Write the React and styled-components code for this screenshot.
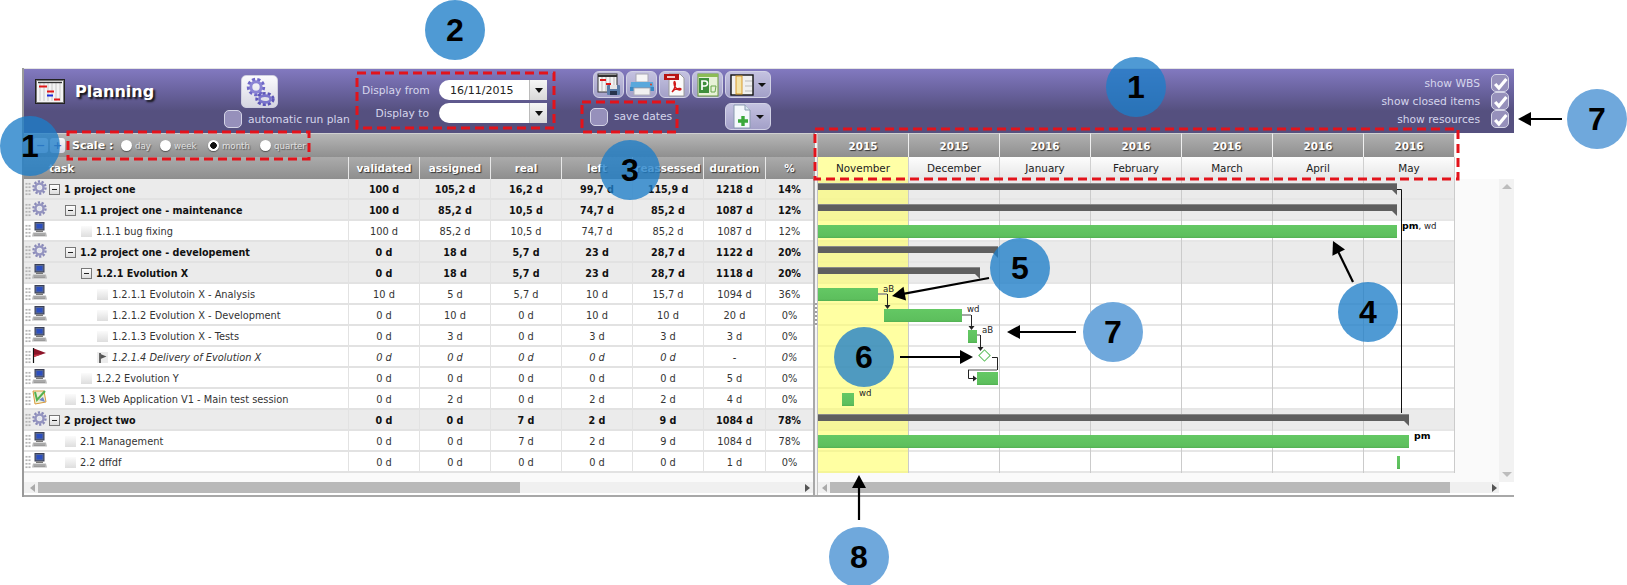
import React from 'react';
import styled, { createGlobalStyle } from 'styled-components';

const GlobalStyle = createGlobalStyle`
	html, body { margin: 0; padding: 0; background: #fff; }
	body { font-family: "DejaVu Sans", Verdana, sans-serif; }
	* { box-sizing: border-box; }
`;

const Page = styled.div`
	position: relative;
	width: 1627px;
	height: 585px;
	padding: 68px 0 0 22px;
	overflow: hidden;
`;
const Frame = styled.div`
	width: 1492px;
	border-left: 2px solid #9a9a9a;
`;

/* header */
const Header = styled.div`
	display: flex;
	height: 65px;
	padding: 0 5px 0 11px;
	background: linear-gradient(#8279c0 0, #6a639f 22px, #55507f 42px, #55507f 100%);
	border-top: 1px solid #e4e4e4;
	color: #d6d6ec;
	font-size: 10.7px;
`;
const Title = styled.div`
	display: flex;
	align-items: center;
	gap: 10px;
	width: 189px;
	padding-bottom: 20px;
	font-size: 16px;
	font-weight: bold;
	color: #fff;
	text-shadow: 2px 2px 2px #111;
`;
const RunPlan = styled.div`
	width: 128px;
	padding-top: 6px;
`;
const LightButton = styled.div`
	display: flex;
	align-items: center;
	justify-content: center;
	width: 37px;
	height: 33px;
	margin-left: 17px;
	border-radius: 5px;
	background: linear-gradient(#fbfbfd, #d6d6e2);
	border: 1px solid #cfcfe0;
`;
const CheckRow = styled.label`
	display: flex;
	align-items: center;
	gap: 6px;
	height: 18px;
	margin-top: 2px;
	white-space: nowrap;
`;
const CheckBox = styled.span`
	display: flex;
	align-items: center;
	justify-content: center;
	flex: none;
	width: 18px;
	height: 18px;
	border-radius: 5px;
	border: 1.5px solid #d4d4e6;
	background: #9690bb;
`;
const DateForm = styled.div`
	display: grid;
	grid-template-columns: 67px 108px;
	grid-auto-rows: 20px;
	column-gap: 10px;
	row-gap: 3px;
	align-items: center;
	margin-left: 10px;
	padding-top: 11px;
`;
const DateLabel = styled.div`
	text-align: right;
	white-space: nowrap;
`;
const DateInput = styled.div`
	display: flex;
	align-items: center;
	height: 20px;
	padding-left: 11px;
	background: #fff;
	border-radius: 10px 0 0 10px;
	color: #222;
	font-size: 11px;
	position: relative;
	overflow: hidden;
`;
const DateDrop = styled.span`
	display: flex;
	align-items: center;
	justify-content: center;
	width: 18px;
	height: 20px;
	margin-left: auto;
	background: linear-gradient(#f6f6f6, #d8d8d8);
	border-left: 1px solid #bbb;
	&::after {
		content: '';
		border: 4px solid transparent;
		border-top: 5px solid #111;
		border-bottom: 0;
	}
`;
const Toolbar = styled.div`
	width: 178px;
	margin-left: 46px;
	padding-top: 2px;
`;
const ToolRow = styled.div`
	display: flex;
	align-items: center;
	justify-content: ${props => props.$between ? 'space-between' : 'flex-start'};
	gap: 2px;
	height: 27px;
	margin-top: ${props => props.$between ? '5px' : 0};
`;
const SaveDates = styled.label`
	display: flex;
	align-items: center;
	gap: 6px;
	margin-left: -3px;
	white-space: nowrap;
`;
const ToolButton = styled.div`
	display: flex;
	align-items: center;
	justify-content: center;
	gap: 4px;
	flex: none;
	width: ${props => props.$wide ? '46px' : '31px'};
	height: 27px;
	border-radius: 6px;
	border: 1.5px solid #d2d2e6;
	background: linear-gradient(#c4c2e0, #a3a0c8);
`;
const Caret = styled.span`
	border: 4px solid transparent;
	border-top: 4px solid #111;
	border-bottom: 0;
`;
const ShowOptions = styled.div`
	margin-left: auto;
	padding-top: 5px;
`;
const ShowRow = styled.label`
	display: flex;
	align-items: center;
	justify-content: flex-end;
	gap: 11px;
	height: 18px;
`;

/* panes */
const Body = styled.div`
	display: flex;
	border-bottom: 2px solid #a8a8a8;
`;
const LeftPane = styled.div`
	width: 789px;
	flex: none;
`;
const Splitter = styled.div`
	display: flex;
	align-items: center;
	width: 5px;
	flex: none;
	background: #f4f4f4;
	border-left: 2px solid #a8a8a8;
	border-right: 1px solid #c4c4c4;
	&::after {
		content: '';
		width: 2px;
		height: 26px;
		margin-left: 0;
		background: repeating-linear-gradient(#fff 0 2px, #a0a0a0 2px 4px);
	}
`;
const RightPane = styled.div`
	width: 696px;
	flex: none;
`;
const ScaleBar = styled.div`
	display: flex;
	align-items: center;
	height: 24px;
	padding-left: 9px;
	background: linear-gradient(#b6b6b6, #8f8f8f);
	border-top: 1px solid #d0d0d0;
`;
const MiniButton = styled.span`
	display: flex;
	align-items: center;
	justify-content: center;
	width: 15px;
	height: 15px;
	margin-right: 2px;
	border-radius: 3px;
	background: linear-gradient(#f8f8fb, #d8d8e6);
	color: #5a63b0;
	font-size: 11px;
	font-weight: bold;
`;
const ScaleLabel = styled.span`
	margin: 0 9px 0 5px;
	width: 40px;
	font-size: 11px;
	font-weight: bold;
	color: #fff;
	text-shadow: 1px 1px 1px #333;
	white-space: nowrap;
`;
const ScaleOption = styled.label`
	display: flex;
	align-items: center;
	gap: 3px;
	width: ${props => props.$w}px;
	font-size: 8.6px;
	color: #e2e2e2;
	text-shadow: 1px 1px 1px #555;
`;
const Radio = styled.span`
	display: block;
	flex: none;
	width: 11px;
	height: 11px;
	border-radius: 50%;
	background: ${props => props.$on ? 'radial-gradient(circle, #111 0 3px, #fff 3.6px)' : '#fff'};
	box-shadow: 0 1px 1px #555;
`;
const Columns = styled.div`
	display: grid;
	grid-template-columns: 324px repeat(5, 71px) 62px 48px;
`;
const HeadCell = styled.div`
	display: flex;
	align-items: center;
	justify-content: ${props => props.$left ? 'flex-start' : 'center'};
	height: 22px;
	padding-left: ${props => props.$left ? '25px' : 0};
	background: linear-gradient(#ababab, #8e8e8e);
	border-left: ${props => props.$left ? 0 : '1px solid #e8e8e8'};
	font-size: 10.4px;
	font-weight: bold;
	color: #fff;
	text-shadow: 1px 1px 1px #333;
	white-space: nowrap;
`;
const Cell = styled.div`
	display: flex;
	align-items: center;
	justify-content: center;
	height: 21px;
	padding-top: 1px;
	background: ${props => props.$bold ? '#ebebeb' : '#fff'};
	border-bottom: 2px solid #e2e2e2;
	border-left: 1px solid #e2e2e2;
	font-size: ${props => props.$bold ? '9.6px' : '9.8px'};
	font-weight: ${props => props.$bold ? 'bold' : 'normal'};
	font-style: ${props => props.$italic ? 'italic' : 'normal'};
	color: ${props => props.$bold ? '#111' : '#333'};
	white-space: nowrap;
`;
const TaskCell = styled(Cell)`
	justify-content: flex-start;
	border-left: 0;
	padding-left: 1px;
`;
const Handle = styled.span`
	flex: none;
	width: 6px;
	height: 14px;
	margin-right: 1px;
	background: radial-gradient(circle, #b4b4b4 0 1px, transparent 1.2px) 0 0 / 3px 3.5px;
`;
const TaskIcon = styled.span`
	display: flex;
	flex: none;
	width: 15px;
	height: 17px;
	margin-top: -2px;
`;
const Tree = styled.span`
	display: flex;
	align-items: center;
	gap: 4px;
	margin-left: ${props => 2 + props.$level * 16}px;
`;
const Toggle = styled.span`
	position: relative;
	display: block;
	flex: none;
	width: 11px;
	height: 11px;
	border: 1px solid #777;
	background: linear-gradient(#fff, #dcdcdc);
	&::after {
		content: '';
		position: absolute;
		left: 2px;
		top: 4px;
		width: 5px;
		height: 1px;
		background: #222;
	}
`;
const Leaf = styled.span`
	display: block;
	flex: none;
	width: 11px;
	height: 11px;
	background: linear-gradient(#fbfbfb, #dedede);
`;
const Spacer = styled.div`
	height: 9px;
	background: #fafafa;
`;
const HScroll = styled.div`
	display: flex;
	align-items: center;
	height: 11px;
	padding-left: ${props => props.$start}px;
	background: #f0f0f0;
	position: relative;
`;
const Thumb = styled.span`
	display: block;
	flex: none;
	width: ${props => props.$w}px;
	height: 11px;
	margin-left: 3px;
	background: #b9b9b9;
`;
const ArrowH = styled.span`
	flex: none;
	margin-left: ${props => props.$auto ? 'auto' : 0};
	margin-right: ${props => props.$auto ? props.$end + 'px' : 0};
	border: 4px solid transparent;
	border-left: ${props => props.$right ? '5px solid #555' : 0};
	border-right: ${props => props.$right ? 0 : '5px solid #aaa'};
`;
const ScrollFoot = styled.div`
	height: 2px;
	background: #fff;
`;

/* gantt */
const GanttHead = styled.div`
	display: grid;
	grid-template-columns: repeat(7, 91px);
	width: 637px;
`;
const YearCell = styled.div`
	display: flex;
	align-items: center;
	justify-content: center;
	height: 24px;
	background: linear-gradient(#b0b0b0, #8f8f8f);
	border-top: 1px solid #d0d0d0;
	border-right: 1px solid #f0f0f0;
	font-size: 10.4px;
	font-weight: bold;
	color: #fff;
	text-shadow: 1px 1px 1px #333;
`;
const MonthCell = styled.div`
	display: flex;
	align-items: center;
	justify-content: center;
	height: 22px;
	background: ${props => props.$current ? '#ffffa6' : 'linear-gradient(#fdfdfd, #e6e6e6)'};
	border-right: 1px solid #d0d0d0;
	font-size: 10.4px;
	color: #222;
`;
const GanttArea = styled.div`
	display: flex;
	background: #fafafa;
`;
const GanttBody = styled.div`
	position: relative;
	width: 637px;
	height: 303px;
`;
const GanttRow = styled.div`
	position: relative;
	height: 21px;
	background: ${props => props.$bold ? '#ebebeb' : '#fff'};
	border-bottom: 2px solid #e6e6e6;
`;
const Bands = styled.div`
	position: absolute;
	left: 0;
	top: 0;
	z-index: 1;
	display: grid;
	grid-template-columns: repeat(7, 91px);
	width: 637px;
	height: 294px;
`;
const Band = styled.div`
	background: ${props => props.$current ? 'rgba(255, 255, 100, 0.6)' : 'transparent'};
	border-right: 1px solid #cbcbcb;
`;
const Bar = styled.div`
	position: absolute;
	z-index: 2;
	left: ${props => props.$x}px;
	top: ${props => props.$top}px;
	width: ${props => props.$w}px;
	height: ${props => props.$h}px;
	background: ${props => props.$dark ? 'linear-gradient(#8a8a8a 0 1px, #5f5f5f 1px)' : 'linear-gradient(#64c864, #5dbf5d 85%, #52b052)'};
	&::after {
		display: ${props => props.$dark ? 'block' : 'none'};
		content: '';
		position: absolute;
		right: 0;
		top: 100%;
		border-top: 5px solid #5f5f5f;
		border-left: 5px solid transparent;
	}
`;
const BarLabel = styled.span`
	position: absolute;
	z-index: 2;
	left: ${props => props.$x}px;
	top: ${props => props.$top}px;
	font-size: 8.6px;
	line-height: 10px;
	color: #222;
	white-space: nowrap;
	b { font-size: 9.4px; color: #000; }
`;
const Diamond = styled.span`
	position: absolute;
	z-index: 2;
	left: 162px;
	top: 4px;
	width: 9px;
	height: 9px;
	transform: rotate(45deg);
	background: #fff;
	border: 1.5px solid #5dbf5d;
`;
const DepLines = styled.svg`
	position: absolute;
	left: 0;
	top: 0;
	z-index: 3;
`;
const Gutter = styled.div`
	width: 44px;
	flex: none;
`;
const VScroll = styled.div`
	display: flex;
	flex-direction: column;
	align-items: center;
	justify-content: space-between;
	width: 15px;
	flex: none;
	padding: 5px 0;
	background: #f2f2f2;
`;
const ArrowV = styled.span`
	border: 5px solid transparent;
	border-bottom: ${props => props.$down ? 0 : '5px solid #bdbdbd'};
	border-top: ${props => props.$down ? '5px solid #bdbdbd' : 0};
`;
const GanttScroll = styled.div`
	width: 681px;
`;

/* annotations over the screenshot */
const Marks = styled.svg`
	position: absolute;
	left: 0;
	top: 0;
	z-index: 5;
	pointer-events: none;
`;
const Bubble = styled.div`
	position: absolute;
	z-index: 6;
	left: ${props => props.$x - 30}px;
	top: ${props => props.$y - 30}px;
	display: flex;
	align-items: center;
	justify-content: center;
	width: 60px;
	height: 60px;
	border-radius: 50%;
	background: ${props => props.$light ? '#6fa8dc' : 'rgba(30, 125, 200, 0.78)'};
	font-family: "Liberation Sans", Arial, sans-serif;
	font-size: 32px;
	font-weight: bold;
	color: #000;
`;

const GearSmall = () => (
	<svg width="15" height="15" viewBox="0 0 15 15">
		<circle cx="7.5" cy="7.5" r="6" fill="none" stroke="#8a8ab8" strokeWidth="2.4" strokeDasharray="2.2 1.5" />
		<circle cx="7.5" cy="7.5" r="4" fill="none" stroke="#9494c0" strokeWidth="2.4" />
		<circle cx="7.5" cy="7.5" r="1.8" fill="#dfe2ee" />
	</svg>
);
const Computer = () => (
	<svg width="15" height="15" viewBox="0 0 15 15">
		<rect x="3" y="0.5" width="9" height="7.5" fill="#5a6a90" stroke="#3a3f55" />
		<rect x="4.500" y="2" width="6" height="4.500" fill="#2c4fc0" />
		<rect x="4" y="8.500" width="7" height="1.500" fill="#777" />
		<path d="M1 10.500h13l1 4H0z" fill="#b8b8b8" />
		<path d="M2 12h11M2 13.500h11" stroke="#8e8e8e" strokeWidth=".7" />
	</svg>
);
const RedFlag = () => (
	<svg width="15" height="15" viewBox="0 0 15 15">
		<path d="M1.500 0v15" stroke="#111" strokeWidth="1.2" />
		<path d="M2 .5l12 4.500-12 4z" fill="#8c1428" />
		<path d="M2 9l8-2.800-8 .6z" fill="#c83848" />
	</svg>
);
const TestSession = () => (
	<svg width="15" height="15" viewBox="0 0 15 15">
		<path d="M1 1h11l2 11-11 2z" fill="#eef0d8" stroke="#d89a3c" />
		<path d="M3 2l2 8 8-9" fill="none" stroke="#54b050" strokeWidth="2" />
		<path d="M7 10l4-3 2 5z" fill="#6f86c8" />
	</svg>
);
const SmallFlag = () => (
	<svg width="11" height="11" viewBox="0 0 11 11">
		<rect width="11" height="11" fill="#ececec" />
		<path d="M3 1v10" stroke="#222" strokeWidth="1.3" />
		<path d="M3.500 2l6 2.500-6 2.500z" fill="#555" />
	</svg>
);
const TASK_ICONS = { gear: GearSmall, pc: Computer, flag: RedFlag, test: TestSession };

const PlanningIcon = () => (
	<svg width="30" height="25" viewBox="0 0 30 25">
		<rect x=".5" y=".5" width="29" height="24" fill="#f4f4f4" stroke="#222" />
		<rect x="1.500" y="1.500" width="27" height="22" fill="none" stroke="#777" />
		<path d="M5 3v19M9 3v19M13 3v19M17 3v19M21 3v19M25 3v19" stroke="#c8c8c8" />
		<path d="M3 3.500h24" stroke="#333" strokeWidth="1.400" />
		<path d="M4 7.500h8M12 12.500h7M19 20.500h6" stroke="#e01818" strokeWidth="2" />
		<path d="M12 16.500h6" stroke="#1c2cd8" strokeWidth="2" />
	</svg>
);
const GearsIcon = () => (
	<svg width="30" height="30" viewBox="0 0 30 30">
		<circle cx="11" cy="10" r="7.500" fill="none" stroke="#6f68c8" strokeWidth="3.400" strokeDasharray="3 2.200" />
		<circle cx="11" cy="10" r="5.200" fill="none" stroke="#8a84d4" strokeWidth="3" />
		<ellipse cx="20" cy="22" rx="8.200" ry="5.600" fill="none" stroke="#5d56b8" strokeWidth="3" strokeDasharray="3 2" />
		<ellipse cx="20" cy="22" rx="5.600" ry="3.400" fill="none" stroke="#7a74cc" strokeWidth="2.600" />
	</svg>
);
const CheckMark = () => (
	<svg width="15" height="15" viewBox="0 0 14 14">
		<path d="M2 7.500l3.500 3.800L12.500 2.800" fill="none" stroke="#fff" strokeWidth="3" />
	</svg>
);
const CalendarSave = () => (
	<svg width="24" height="23" viewBox="0 0 24 23">
		<rect x="1" y="1" width="19" height="18" fill="#f4f4f4" stroke="#333" />
		<path d="M1 3h19" stroke="#333" strokeWidth="2" />
		<path d="M5 4v14M9 4v14M13 4v14M17 4v14" stroke="#bbb" />
		<path d="M3 7h6M9 11h5" stroke="#e01818" strokeWidth="2" />
		<rect x="10" y="12" width="13" height="10" rx="1" fill="#5a7ca8" />
		<rect x="13" y="12" width="7" height="4" fill="#e6e6e6" />
		<rect x="13" y="18" width="7" height="4" fill="#26344c" />
	</svg>
);
const Printer = () => (
	<svg width="26" height="23" viewBox="0 0 26 23">
		<rect x="7" y="1" width="12" height="8" fill="#f6f6f6" stroke="#a8a8b4" />
		<path d="M2 9h22l1 8H1z" fill="#5aa8dc" />
		<rect x="1" y="14" width="24" height="4" fill="#3a88c4" />
		<rect x="5" y="15" width="16" height="7" fill="#f0f0f0" stroke="#b0b0b8" />
		<circle cx="22" cy="11.500" r="1" fill="#e04020" />
	</svg>
);
const PdfDoc = () => (
	<svg width="24" height="24" viewBox="0 0 24 24">
		<path d="M6 1h11l4 4v18H6z" fill="#fafafa" stroke="#9a9a9a" />
		<rect x="1" y="1" width="15" height="6" fill="#b81414" />
		<rect x="4" y="3" width="8" height="2" fill="#f4c8c8" />
		<path d="M9 19c3-3 4-8 3-10s-2 3 1 6 5 2 5 1-6-1-9 3z" fill="none" stroke="#d01818" strokeWidth="1.400" />
	</svg>
);
const ProjectDoc = () => (
	<svg width="24" height="24" viewBox="0 0 24 24">
		<rect x="2" y="1" width="20" height="22" fill="#e8f2d8" stroke="#6a9a3c" />
		<rect x="2" y="1" width="20" height="3" fill="#8cbc54" />
		<rect x="3" y="5" width="10" height="15" fill="#3f8f3c" />
		<path d="M6 17V8h3a2.500 2.500 0 0 1 0 5H6" fill="none" stroke="#fff" strokeWidth="1.700" />
		<path d="M15 13h5l-1 6h-4z" fill="none" stroke="#6aa84c" />
	</svg>
);
const ColumnsIcon = () => (
	<svg width="24" height="22" viewBox="0 0 24 22">
		<rect x="1" y="1" width="22" height="20" fill="#f0f0f0" stroke="#111" strokeWidth="1.400" />
		<rect x="6" y="2" width="6" height="18" fill="#f4e4a8" stroke="#d89a2c" />
		<path d="M15 7h7M15 12h7M15 17h7" stroke="#bbb" />
	</svg>
);
const NewDoc = () => (
	<svg width="20" height="25" viewBox="0 0 20 25">
		<path d="M2 1h11l5 5v18H2z" fill="#f4f8fc" stroke="#8a9ab0" />
		<path d="M13 1v5h5" fill="#d8e4f0" stroke="#8a9ab0" />
		<path d="M11 12v10M6 17h10" stroke="#3aa83a" strokeWidth="3.400" />
	</svg>
);

const COLS = ['validated', 'assigned', 'real', 'left', 'reassessed', 'duration', '%'];
const ROWS = [
	{ level: 0, icon: 'gear', name: '1 project one', bold: true, vals: ['100 d', '105,2 d', '16,2 d', '99,7 d', '115,9 d', '1218 d', '14%'] },
	{ level: 1, icon: 'gear', name: '1.1 project one - maintenance', bold: true, vals: ['100 d', '85,2 d', '10,5 d', '74,7 d', '85,2 d', '1087 d', '12%'] },
	{ level: 2, icon: 'pc', name: '1.1.1 bug fixing', vals: ['100 d', '85,2 d', '10,5 d', '74,7 d', '85,2 d', '1087 d', '12%'] },
	{ level: 1, icon: 'gear', name: '1.2 project one - developement', bold: true, vals: ['0 d', '18 d', '5,7 d', '23 d', '28,7 d', '1122 d', '20%'] },
	{ level: 2, icon: 'pc', name: '1.2.1 Evolution X', bold: true, vals: ['0 d', '18 d', '5,7 d', '23 d', '28,7 d', '1118 d', '20%'] },
	{ level: 3, icon: 'pc', name: '1.2.1.1 Evolutoin X - Analysis', vals: ['10 d', '5 d', '5,7 d', '10 d', '15,7 d', '1094 d', '36%'] },
	{ level: 3, icon: 'pc', name: '1.2.1.2 Evolution X - Development', vals: ['0 d', '10 d', '0 d', '10 d', '10 d', '20 d', '0%'] },
	{ level: 3, icon: 'pc', name: '1.2.1.3 Evolution X - Tests', vals: ['0 d', '3 d', '0 d', '3 d', '3 d', '3 d', '0%'] },
	{ level: 3, icon: 'flag', name: '1.2.1.4 Delivery of Evolution X', italic: true, vals: ['0 d', '0 d', '0 d', '0 d', '0 d', '-', '0%'] },
	{ level: 2, icon: 'pc', name: '1.2.2 Evolution Y', vals: ['0 d', '0 d', '0 d', '0 d', '0 d', '5 d', '0%'] },
	{ level: 1, icon: 'test', name: '1.3 Web Application V1 - Main test session', vals: ['0 d', '2 d', '0 d', '2 d', '2 d', '4 d', '0%'] },
	{ level: 0, icon: 'gear', name: '2 project two', bold: true, vals: ['0 d', '0 d', '7 d', '2 d', '9 d', '1084 d', '78%'] },
	{ level: 1, icon: 'pc', name: '2.1 Management', vals: ['0 d', '0 d', '7 d', '2 d', '9 d', '1084 d', '78%'] },
	{ level: 1, icon: 'pc', name: '2.2 dffdf', vals: ['0 d', '0 d', '0 d', '0 d', '0 d', '1 d', '0%'] },
];

const MONTHS = [
	['2015', 'November'], ['2015', 'December'], ['2016', 'January'], ['2016', 'February'],
	['2016', 'March'], ['2016', 'April'], ['2016', 'May'],
];

// one entry per gantt row: bars in px from the left edge of the chart
const GANTT = [
	{ bars: [{ x: 0, w: 579, dark: true }] },
	{ bars: [{ x: 0, w: 579, dark: true }] },
	{ bars: [{ x: 0, w: 579 }], labels: [{ x: 584, top: 0, html: <><b>pm</b>, wd</> }] },
	{ bars: [{ x: 0, w: 180, dark: true }] },
	{ bars: [{ x: 0, w: 162, dark: true }] },
	{ bars: [{ x: 0, w: 60 }], labels: [{ x: 65, top: 0, html: 'aB' }] },
	{ bars: [{ x: 66, w: 78 }], labels: [{ x: 149, top: -1, html: 'wd' }] },
	{ bars: [{ x: 150, w: 9 }], labels: [{ x: 164, top: -1, html: 'aB' }] },
	{ diamond: true },
	{ bars: [{ x: 159, w: 21 }] },
	{ bars: [{ x: 24, w: 12 }], labels: [{ x: 41, top: -1, html: 'wd' }] },
	{ bars: [{ x: 0, w: 591, dark: true }] },
	{ bars: [{ x: 0, w: 591 }], labels: [{ x: 596, top: 0, html: <b>pm</b> }] },
	{ bars: [{ x: 579, w: 3 }] },
];

const RedBox = ({ x, y, w, h }) => (
	<rect x={x} y={y} width={w} height={h} fill="none" stroke="#e3131b" strokeWidth="3" strokeDasharray="9 5" />
);

const Arrow = ({ from, to }) => {
	const angle = Math.atan2(to[1] - from[1], to[0] - from[0]);
	const point = (len, off) => [
		to[0] - len * Math.cos(angle) - off * Math.sin(angle),
		to[1] - len * Math.sin(angle) + off * Math.cos(angle),
	].join(',');
	return (
		<g>
			<line x1={from[0]} y1={from[1]} x2={to[0] - 10 * Math.cos(angle)} y2={to[1] - 10 * Math.sin(angle)} stroke="#000" strokeWidth="2.2" />
			<polygon points={`${to.join(',')} ${point(13, 7)} ${point(13, -7)}`} fill="#000" />
		</g>
	);
};

const Planning = () => (
	<Frame>
		<Header>
			<Title><PlanningIcon />Planning</Title>
			<RunPlan>
				<LightButton><GearsIcon /></LightButton>
				<CheckRow><CheckBox />automatic run plan</CheckRow>
			</RunPlan>
			<DateForm>
				<DateLabel>Display from</DateLabel>
				<DateInput>16/11/2015<DateDrop /></DateInput>
				<DateLabel>Display to</DateLabel>
				<DateInput><DateDrop /></DateInput>
			</DateForm>
			<Toolbar>
				<ToolRow>
					<ToolButton><CalendarSave /></ToolButton>
					<ToolButton><Printer /></ToolButton>
					<ToolButton><PdfDoc /></ToolButton>
					<ToolButton><ProjectDoc /></ToolButton>
					<ToolButton $wide><ColumnsIcon /><Caret /></ToolButton>
				</ToolRow>
				<ToolRow $between>
					<SaveDates><CheckBox />save dates</SaveDates>
					<ToolButton $wide><NewDoc /><Caret /></ToolButton>
				</ToolRow>
			</Toolbar>
			<ShowOptions>
				<ShowRow>show WBS<CheckBox><CheckMark /></CheckBox></ShowRow>
				<ShowRow>show closed items<CheckBox><CheckMark /></CheckBox></ShowRow>
				<ShowRow>show resources<CheckBox><CheckMark /></CheckBox></ShowRow>
			</ShowOptions>
		</Header>
		<Body>
			<LeftPane>
				<ScaleBar>
					<MiniButton>−</MiniButton>
					<MiniButton>+</MiniButton>
					<ScaleLabel>Scale :</ScaleLabel>
					<ScaleOption $w={39}><Radio />day</ScaleOption>
					<ScaleOption $w={48}><Radio />week</ScaleOption>
					<ScaleOption $w={52}><Radio $on />month</ScaleOption>
					<ScaleOption $w={50}><Radio />quarter</ScaleOption>
				</ScaleBar>
				<Columns>
					<HeadCell $left>task</HeadCell>
					{COLS.map(col => <HeadCell key={col}>{col}</HeadCell>)}
					{ROWS.map(row => {
						const Icon = TASK_ICONS[row.icon];
						return (
							<React.Fragment key={row.name}>
								<TaskCell $bold={row.bold} $italic={row.italic}>
									<Handle />
									<TaskIcon><Icon /></TaskIcon>
									<Tree $level={row.level}>
										{row.bold ? <Toggle /> : row.italic ? <SmallFlag /> : <Leaf />}
										{row.name}
									</Tree>
								</TaskCell>
								{row.vals.map((val, i) => (
									<Cell key={i} $bold={row.bold} $italic={row.italic}>{val}</Cell>
								))}
							</React.Fragment>
						);
					})}
				</Columns>
				<Spacer />
				<HScroll $start={6}>
					<ArrowH />
					<Thumb $w={482} />
					<ArrowH $right $auto $end={3} />
				</HScroll>
				<ScrollFoot />
			</LeftPane>
			<Splitter />
			<RightPane>
				<GanttHead>
					{MONTHS.map(([year], i) => <YearCell key={i}>{year}</YearCell>)}
					{MONTHS.map(([, month], i) => <MonthCell key={month} $current={i === 0}>{month}</MonthCell>)}
				</GanttHead>
				<GanttArea>
					<GanttBody>
						{GANTT.map((row, i) => (
							<GanttRow key={i} $bold={ROWS[i].bold}>
								{(row.bars || []).map((bar, j) => (
									<Bar key={j} $x={bar.x} $w={bar.w} $dark={bar.dark} $top={bar.dark ? 4 : 3.5} $h={bar.dark ? 7 : 13} />
								))}
								{(row.labels || []).map((label, j) => (
									<BarLabel key={j} $x={label.x} $top={label.top}>{label.html}</BarLabel>
								))}
								{row.diamond && <Diamond />}
							</GanttRow>
						))}
						<Bands>
							{MONTHS.map((m, i) => <Band key={i} $current={i === 0} />)}
						</Bands>
						<DepLines width="637" height="294" viewBox="0 0 637 294" fill="none">
							<path d="M60 115H69" stroke="#888" strokeWidth="1.500" />
							<path d="M69.500 115V127" stroke="#222" />
							<path d="M66.500 126l3 4 3-4z" fill="#222" />
							<path d="M144 136H153" stroke="#888" strokeWidth="1.500" />
							<path d="M153.500 136V147" stroke="#222" />
							<path d="M150.500 147l3 4 3-4z" fill="#222" />
							<path d="M159 156H162" stroke="#888" strokeWidth="1.500" />
							<path d="M162.500 156V168" stroke="#222" />
							<path d="M159.500 168l3 4 3-4z" fill="#222" />
							<path d="M174 178.500H179.500V191" stroke="#222" />
							<path d="M179 191H150" stroke="#888" strokeWidth="1.500" />
							<path d="M150.500 191V199.500H155" stroke="#222" />
							<path d="M155 196.500l4 3-4 3z" fill="#222" />
							<path d="M579 10.500H583.500V234" stroke="#111" />
						</DepLines>
					</GanttBody>
					<Gutter />
					<VScroll>
						<ArrowV />
						<ArrowV $down />
					</VScroll>
				</GanttArea>
				<GanttScroll>
					<HScroll $start={4}>
						<ArrowH />
						<Thumb $w={620} />
						<ArrowH $right $auto $end={2} />
					</HScroll>
					<ScrollFoot />
				</GanttScroll>
			</RightPane>
		</Body>
	</Frame>
);

const App = () => (
	<Page>
		<GlobalStyle />
		<Planning />
		<Marks width="1627" height="585" viewBox="0 0 1627 585">
			<RedBox x={357} y={73} w={197} h={55} />
			<RedBox x={68} y={132} w={241} h={27} />
			<RedBox x={582} y={102} w={95} h={30} />
			<RedBox x={815} y={129} w={643} h={50} />
			<Arrow from={[1562, 119]} to={[1518, 119]} />
			<Arrow from={[1353, 282]} to={[1333, 241]} />
			<Arrow from={[989, 278]} to={[892, 296]} />
			<Arrow from={[1076, 332]} to={[1007, 332]} />
			<Arrow from={[900, 357]} to={[973, 357]} />
			<Arrow from={[859, 520]} to={[859, 475]} />
		</Marks>
		<Bubble $x={455} $y={30}>2</Bubble>
		<Bubble $x={30} $y={146}>1</Bubble>
		<Bubble $x={1136} $y={87}>1</Bubble>
		<Bubble $x={1597} $y={119} $light>7</Bubble>
		<Bubble $x={630} $y={170}>3</Bubble>
		<Bubble $x={1368} $y={312}>4</Bubble>
		<Bubble $x={1020} $y={268}>5</Bubble>
		<Bubble $x={864} $y={357}>6</Bubble>
		<Bubble $x={1113} $y={332} $light>7</Bubble>
		<Bubble $x={859} $y={557} $light>8</Bubble>
	</Page>
);

export default App;
